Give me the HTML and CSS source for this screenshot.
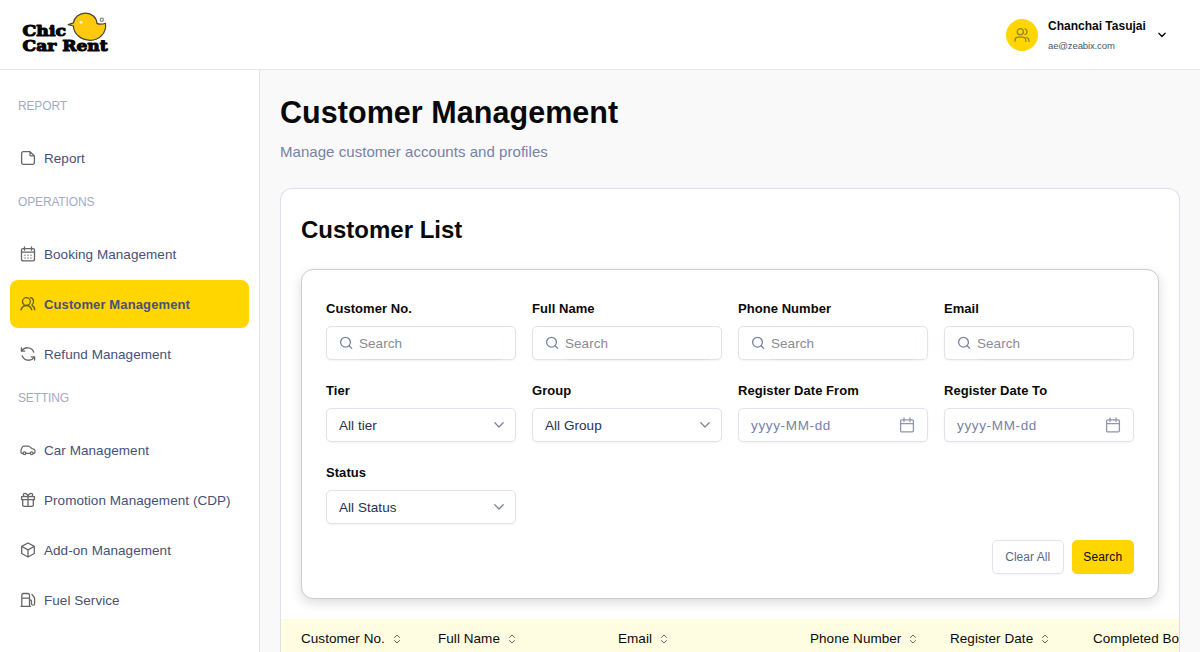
FILE: index.html
```html
<!DOCTYPE html>
<html lang="en">
<head>
<meta charset="utf-8">
<title>Customer Management</title>
<link rel="stylesheet" href="styles.css">
</head>
<body>
<svg class="defs" aria-hidden="true">
  <symbol id="search" viewBox="0 0 16 16"><circle cx="6.500" cy="7.200" r="4.900"/><path d="M10.100 10.800l2.600 2.600"/></symbol>
  <symbol id="down" viewBox="0 0 16 16"><path d="M3.800 5.800L8 10l4.200-4.200"/></symbol>
  <symbol id="cal" viewBox="0 0 16 16"><rect x="1.600" y="2.800" width="12.800" height="12" rx="1.200"/><path d="M1.600 6.600h12.800M5 1v3.400M11 1v3.400"/></symbol>
  <symbol id="sort" viewBox="0 0 8 10"><path d="M1.400 3.500L4 1l2.600 2.500M1.400 6.500L4 9l2.600-2.500"/></symbol>
</svg>
<header class="topbar">
  <svg class="logo" width="92" height="46" viewBox="0 0 92 46">
    <path class="bird" d="M48.200 13.600l5.200-1.700C54.500 6 59.500 2.200 65.500 2.200c6.200 0 11 4 11.500 10.200 3 1.600 5.500.9 8.500-.1 1.200 9.500-6 17-15.200 17-9.500 0-16.500-6.500-16.900-14.300z"/>
    <circle class="shine" cx="61" cy="11.200" r="1.500"/>
    <circle class="reg" cx="81.800" cy="8.800" r="1.600"/>
    <text class="wordmark" x="2.600" y="24.800" textLength="43.500" lengthAdjust="spacingAndGlyphs">Chic</text>
    <text class="wordmark" x="2.600" y="39.800" textLength="85" lengthAdjust="spacingAndGlyphs">Car Rent</text>
  </svg>
  <div class="account">
    <div class="avatar"><svg class="icon" viewBox="0 0 16 16"><circle cx="6.300" cy="4.800" r="3.100"/><path d="M1 14.300v-.8c0-2 1.500-3.300 3.300-3.300h4.200c1.900 0 3.300 1.300 3.300 3.300v.8M11 1.900c2.800.9 2.800 4.900 0 5.800M12.800 10.400c1.400.5 2.200 1.600 2.200 3.100v.8"/></svg></div>
    <div class="who"><div class="name">Chanchai Tasujai</div><div class="mail">ae@zeabix.com</div></div>
    <svg class="caret"><use href="#down"/></svg>
  </div>
</header>
<div class="layout">
<nav class="sidebar">
  <h6 class="section">REPORT</h6>
  <a class="item"><svg class="icon" viewBox="0 0 16 16"><path d="M10 1.700H3.300c-1 0-1.700.7-1.700 1.700v9.200c0 1 .7 1.700 1.700 1.700h9.400c1 0 1.700-.7 1.700-1.700V5.900zM10 1.700v3c0 .7.500 1.200 1.200 1.200h3.200"/></svg>Report</a>
  <h6 class="section">OPERATIONS</h6>
  <a class="item"><svg class="icon" viewBox="0 0 16 16"><rect x="1.500" y="2.600" width="13" height="12.200" rx="1.300"/><path d="M1.500 6.200h13M4.500 .8v3.400M11.500 .8v3.400M5 9.200h.1M8 9.200h.1M11 9.200h.1M5 12h.1M8 12h.1M11 12h.1"/></svg>Booking Management</a>
  <a class="item active"><svg class="icon" viewBox="0 0 16 16"><circle cx="6.400" cy="5.600" r="3.900"/><path d="M1 13.800c.8-2.500 2.700-4.300 5.400-4.300s4.600 1.800 5.400 4.300M10.400 1.700c3.300.4 4.400 4.900 1.500 7.400 1.600.9 2.500 2.500 2.900 4.700"/></svg>Customer Management</a>
  <a class="item"><svg class="icon" viewBox="0 0 16 16"><path d="M4.700 5.200H1.400V2M1.700 5C4.400.500 11.600.500 13.800 6.200M11.300 10.800h3.300V14M14.300 11C11.600 15.500 4.400 15.500 2.200 9.800"/></svg>Refund Management</a>
  <h6 class="section">SETTING</h6>
  <a class="item"><svg class="icon" viewBox="-.5 -.300 17 17"><path d="M2.600 11.700H1.500c-.6 0-.9-.4-.9-.9V8.200c0-.5.100-.8.400-1.200l1.200-2.200c.3-.5.700-.8 1.300-.8h4.700c.6 0 1 .2 1.400.6l2.500 2.100 1.900.5c.9.200 1.400.8 1.400 1.700v1.700c0 .7-.4 1.100-1.100 1.100h-.6M5.800 11.700h4.600"/><circle cx="4.200" cy="11.600" r="1.500"/><circle cx="12" cy="11.600" r="1.500"/></svg>Car Management</a>
  <a class="item"><svg class="icon" viewBox="0 0 16 16"><path d="M1.600 4.600h12.800v3H1.600zM2.700 7.700v5.300c0 .8.500 1.300 1.300 1.300h8c.8 0 1.300-.5 1.300-1.300V7.700M8 4.400v9.900M8 4.400C7.500 2.200 6.400 1.300 5 1.300 2.800 1.300 2.600 4.400 5 4.400M8 4.400C8.500 2.200 9.600 1.300 11 1.300c2.200 0 2.400 3.100 0 3.100"/></svg>Promotion Management (CDP)</a>
  <a class="item"><svg class="icon" viewBox="0 0 16 16"><path d="M8 1l6.300 3.300v7.200L8 15l-6.300-3.500V4.300zM1.900 4.500L8 7.900l6.100-3.400M8 7.900V15"/></svg>Add-on Management</a>
  <a class="item"><svg class="icon" viewBox="0 0 16 16"><path d="M1.800 14.300V3c0-.9.600-1.500 1.500-1.500h4.700c.9 0 1.500.6 1.500 1.500v11.300M1 14.300h9.500M1.800 6.200h7.700M9.500 8h.7c.8 0 1.300.5 1.300 1.300v2.400c0 2 3.100 2 3.100 0V6.800c0-1.200-.7-2.400-2.600-4.300"/></svg>Fuel Service</a>
</nav>
<main class="main">
  <h1 class="title">Customer Management</h1>
  <p class="subtitle">Manage customer accounts and profiles</p>
  <section class="card">
    <h2 class="card-title">Customer List</h2>
    <form class="filters">
      <div class="grid">
        <div class="field"><label class="label">Customer No.</label><div class="control"><svg class="search-icon"><use href="#search"/></svg><span class="placeholder">Search</span></div></div>
        <div class="field"><label class="label">Full Name</label><div class="control"><svg class="search-icon"><use href="#search"/></svg><span class="placeholder">Search</span></div></div>
        <div class="field"><label class="label">Phone Number</label><div class="control"><svg class="search-icon"><use href="#search"/></svg><span class="placeholder">Search</span></div></div>
        <div class="field"><label class="label">Email</label><div class="control"><svg class="search-icon"><use href="#search"/></svg><span class="placeholder">Search</span></div></div>
        <div class="field"><label class="label">Tier</label><div class="control select">All tier<svg class="chevron"><use href="#down"/></svg></div></div>
        <div class="field"><label class="label">Group</label><div class="control select">All Group<svg class="chevron"><use href="#down"/></svg></div></div>
        <div class="field"><label class="label">Register Date From</label><div class="control date">yyyy-MM-dd<svg class="cal"><use href="#cal"/></svg></div></div>
        <div class="field"><label class="label">Register Date To</label><div class="control date">yyyy-MM-dd<svg class="cal"><use href="#cal"/></svg></div></div>
        <div class="field"><label class="label">Status</label><div class="control select">All Status<svg class="chevron"><use href="#down"/></svg></div></div>
      </div>
      <div class="actions"><button class="btn" type="button">Clear All</button><button class="btn primary" type="button">Search</button></div>
    </form>
    <div class="thead">
      <div class="th">Customer No.<svg class="sort"><use href="#sort"/></svg></div>
      <div class="th">Full Name<svg class="sort"><use href="#sort"/></svg></div>
      <div class="th">Email<svg class="sort"><use href="#sort"/></svg></div>
      <div class="th">Phone Number<svg class="sort"><use href="#sort"/></svg></div>
      <div class="th">Register Date<svg class="sort"><use href="#sort"/></svg></div>
      <div class="th">Completed Booking</div>
    </div>
  </section>
</main>
</div>
</body>
</html>
```
FILE: styles.css
```css
* { box-sizing: border-box; }
body { margin: 0; height: 652px; overflow: hidden; display: flex; flex-direction: column; background: #f9f9f9; color: #09090b; font-family: "Liberation Sans", Arial, sans-serif; font-size: 13.500px; letter-spacing: .05px; }
h1, h2, h6, p { margin: 0; }
svg { fill: none; stroke: currentColor; stroke-width: 1.300; stroke-linecap: round; stroke-linejoin: round; flex: none; }
.defs { position: absolute; width: 0; height: 0; }

.topbar { height: 70px; flex: none; display: flex; justify-content: space-between; background: #fff; border-bottom: 1px solid #e5e5e5; padding: 11px 32px 0 20px; }
.wordmark { font: bold 15.500px "DejaVu Serif", serif; fill: #050505; stroke: #050505; stroke-width: 1.100; letter-spacing: 0; }
.bird { fill: #ffc90e; stroke: #454237; stroke-width: 1.2; }
.shine { fill: #fff6cf; stroke: none; }
.reg { stroke: #888; stroke-width: 1.200; }
.account { display: flex; height: 47px; align-items: center; }
.avatar { width: 32px; height: 32px; border-radius: 50%; background: #ffd600; display: grid; place-items: center; color: #948528; }
.who { width: 98px; margin-left: 10px; white-space: nowrap; }
.name { font-size: 12px; font-weight: bold; line-height: 16px; letter-spacing: 0; margin-top: 1px; }
.mail { font-size: 9.500px; line-height: 14px; color: #475569; letter-spacing: -.12px; margin-top: 5px; }
.caret { width: 12px; height: 12px; margin-left: 10px; stroke-width: 1.800; }

.layout { flex: 1; min-height: 0; display: flex; }
.sidebar { width: 260px; flex: none; background: #fff; border-right: 1px solid #e5e5e5; padding: 16px 10px 0; }
.section { height: 40px; line-height: 40px; padding-left: 8px; margin-bottom: 8px; font-size: 12px; font-weight: normal; color: #a3abc2; letter-spacing: -.15px; }
.item { display: flex; align-items: center; gap: 8px; height: 48px; padding-left: 10px; margin-bottom: 2px; color: #475178; }
.item + .section { margin-top: -2px; }
.item .icon { color: #666; }
.icon { width: 16px; height: 16px; }
.item.active { background: #ffd600; border-radius: 8px; font-size: 13px; font-weight: bold; letter-spacing: .12px; }
.item.active .icon { color: #6b5f10; }

.main { flex: 1; min-width: 0; padding: 24px 20px 0; }
.title { font-size: 30.500px; line-height: 36px; letter-spacing: .05px; }
.subtitle { font-size: 15px; line-height: 24px; margin-top: 10px; color: #7682a6; letter-spacing: .05px; }
.card { margin-top: 24px; height: 464px; background: #fff; border: 1px solid #dedfeb; border-bottom: 0; border-radius: 12px 12px 0 0; overflow: hidden; }
.card-title { font-size: 24px; line-height: 32px; margin: 25px 20px 23px; letter-spacing: 0; }
.filters { margin: 0 20px 20px; height: 330px; padding: 24px; background: #fff; border: 1px solid #c8cbdc; border-radius: 12px; box-shadow: 0 4px 12px rgba(0, 0, 0, .14); }
.grid { display: grid; grid-template-columns: repeat(4, 190px); gap: 16px; }
.label { display: block; height: 32px; line-height: 29px; font-size: 13px; font-weight: bold; letter-spacing: .05px; }
.control { height: 34px; display: flex; align-items: center; border: 1px solid #e1e2ee; border-radius: 5px; padding: 0 12px; box-shadow: 0 1px 2px rgba(0, 0, 0, .05); color: #26314f; }
.search-icon { width: 16px; height: 16px; color: #7682a6; }
.placeholder { margin-left: 4px; color: #8b8b93; width: 145px; height: 32px; line-height: 33px; border-radius: 5px; box-shadow: 0 1px 2px rgba(0, 0, 0, .04); }
.select, .date { justify-content: space-between; }
.chevron { width: 16px; height: 16px; margin-right: -4px; color: #7b8497; }
.date { color: #7682a6; letter-spacing: .65px; }
.cal { width: 16px; height: 16px; color: #8f96ad; }
.actions { display: flex; justify-content: flex-end; gap: 8px; margin-top: 16px; }
.btn { height: 34px; width: 71.500px; padding: 0; border: 1px solid #e1e2ee; border-radius: 5px; background: #fff; color: #5b668d; font: 12px "Liberation Sans", Arial, sans-serif; letter-spacing: .05px; box-shadow: 0 1px 2px rgba(0, 0, 0, .04); }
.btn.primary { width: 62.500px; background: #ffd600; border-color: #ffd600; color: #09090b; letter-spacing: .15px; }

.thead { display: grid; grid-template-columns: 137px 180px 192px 140px 143px 160px; width: 1000px; padding-left: 20px; height: 39px; background: #fffde1; }
.th { display: flex; align-items: center; white-space: nowrap; }
.sort { width: 8px; height: 10px; margin-left: 8px; color: #666; stroke-width: 1; }
```
